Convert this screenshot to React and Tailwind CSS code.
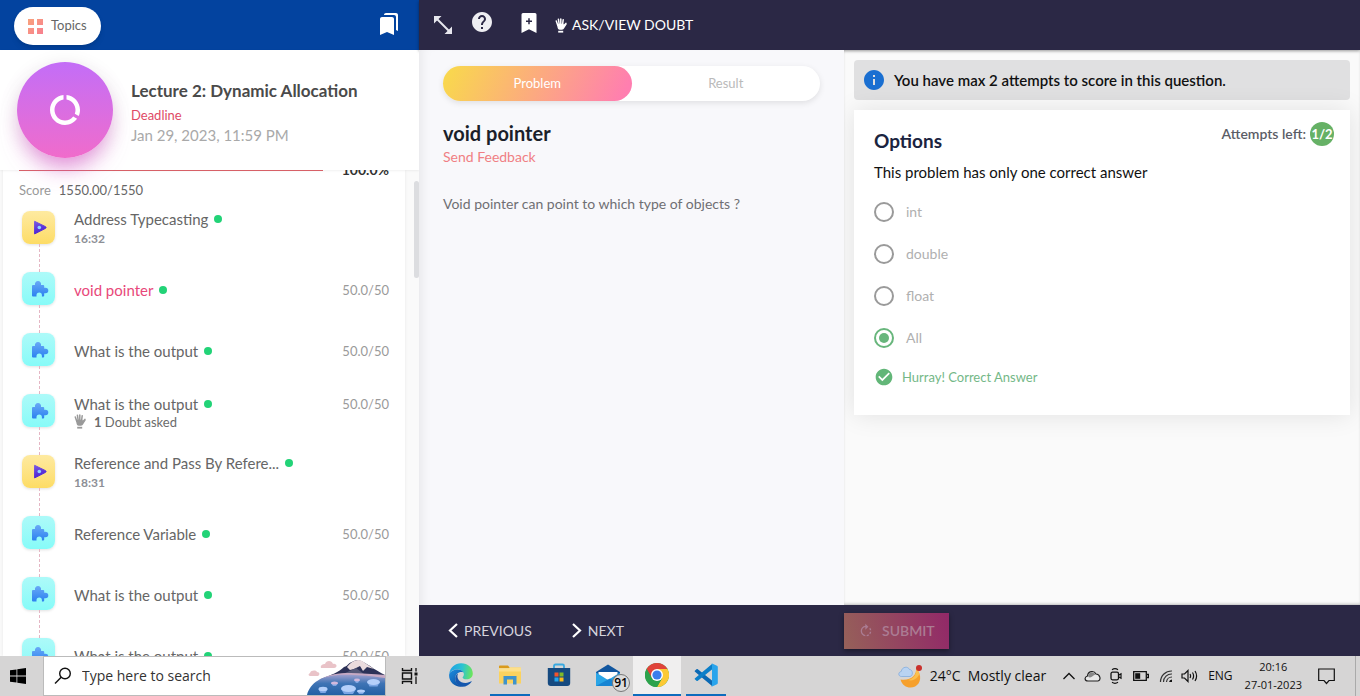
import React from "react";
import { MdBookmarks, MdHelp, MdDataUsage, MdRotateRight, MdCheckCircle, MdInfo } from "react-icons/md";

const lessons = [
  { kind: "video", title: "Address Typecasting", time: "16:32" },
  { kind: "quiz", title: "void pointer", score: "50.0/50", current: true },
  { kind: "quiz", title: "What is the output", score: "50.0/50" },
  { kind: "quiz", title: "What is the output", score: "50.0/50", doubts: 1 },
  { kind: "video", title: "Reference and Pass By Refere...", time: "18:31" },
  { kind: "quiz", title: "Reference Variable", score: "50.0/50" },
  { kind: "quiz", title: "What is the output", score: "50.0/50" },
  { kind: "quiz", title: "What is the output", score: "50.0/50" },
];

const options = ["int", "double", "float", "All"];

function HandIcon({ className }) {
  return (
    <svg viewBox="0 0 12 15" className={className} aria-hidden="true">
      <g fill="none" stroke="currentColor" strokeLinecap="round" strokeWidth="1.5">
        <path d="M1.3 3 2.8 7.5M3.4 1.2 4.2 6.5M5.8.9V6.5M8.2 1.7 7.6 6.5M8.2 8.2 10.9 5.4" />
      </g>
      <path d="M2 5.8h6.4l.8 1.6 1.9-1.8.6.7L9 10.6c-.6.9-1.2 1.1-2 1.1H4.6c-1 0-1.7-.9-2-2Z" fill="currentColor" />
      <path d="M3.2 12.8h5V14.6h-5Z" fill="currentColor" />
    </svg>
  );
}

function TopicsIcon() {
  return (
    <svg viewBox="0 0 15 15" className="size-[15px]" aria-hidden="true">
      <defs>
        <linearGradient id="topics" x1="0" y1="0" x2="1" y2="1">
          <stop offset="0" stopColor="#f9a27c" />
          <stop offset="1" stopColor="#f77f8f" />
        </linearGradient>
      </defs>
      <path d="M0 0h6v6H0ZM9 0h6v6H9ZM0 9h6v6H0ZM9 9h6v6H9Z" fill="url(#topics)" />
    </svg>
  );
}

function LessonIcon({ kind }) {
  if (kind === "video") {
    return (
      <span className="flex size-[33px] items-center justify-center rounded-lg bg-linear-to-b from-[#feeaa0] to-[#fddc64] shadow-[0_1px_3px_rgba(0,0,0,0.12)]">
        <svg viewBox="0 0 14 15" className="ml-0.5 h-[15px] w-3.5" aria-hidden="true">
          <defs>
            <linearGradient id="play" x1="0" y1="0" x2="0.3" y2="1">
              <stop offset="0" stopColor="#7a5ae0" />
              <stop offset="1" stopColor="#4a1fd6" />
            </linearGradient>
          </defs>
          <path d="M1.600 1.300 12.600 6.700c.7.400.7 1.200 0 1.600L1.600 13.900Z" fill="url(#play)" stroke="url(#play)" strokeWidth="1" strokeLinejoin="round" />
          <circle cx="6.300" cy="7.500" r="1.800" fill="#8fd0ff" />
        </svg>
      </span>
    );
  }
  return (
    <span className="flex size-[33px] items-center justify-center rounded-lg bg-linear-to-b from-[#adfaf9] to-[#86fbf8] shadow-[0_1px_3px_rgba(0,0,0,0.12)]">
      <svg viewBox="0 0 18 18" className="ml-0.5 size-[18px]" aria-hidden="true">
        <defs>
          <linearGradient id="puzzle" x1="0" y1="0" x2="0" y2="1">
            <stop offset="0" stopColor="#69a9f6" />
            <stop offset="1" stopColor="#2c82f0" />
          </linearGradient>
        </defs>
        <path
          d="M2 5h2a3.100 3.100 0 1 1 6 0h2.200a1 1 0 0 1 1 1v1.700h1.300a2.800 2.800 0 0 1 0 5.600h-1.300v2.200a1 1 0 0 1-1 1h-1.300v-1.200a2.700 2.700 0 0 0-5.400 0v1.200H2a1 1 0 0 1-1-1V6a1 1 0 0 1 1-1Z"
          fill="url(#puzzle)"
        />
      </svg>
    </span>
  );
}

function Lesson({ kind, title, time, score, current, doubts }) {
  return (
    <li className="flex h-[61px] gap-[19px] pl-[19px] pr-4">
      <div className="flex flex-col items-center">
        <LessonIcon kind={kind} />
        <span className="ml-0.5 flex-1 border-l border-dashed border-[#e5b6c4]" />
      </div>
      <a href="#lesson" className="flex h-[35px] min-w-0 flex-1 flex-col justify-center">
        <span className="flex items-center gap-1.5 text-[15px] leading-5">
          <span className={current ? "text-[#e8487a]" : "text-[#666]"}>{title}</span>
          <span className="size-2 shrink-0 rounded-full bg-[#22d377]" />
          {score && <span className="ml-auto text-[13px] text-[#9a9a9a]">{score}</span>}
        </span>
        {time && <span className="text-xs leading-5 font-bold text-[#8d8f96]">{time}</span>}
        {doubts && (
          <span className="flex items-center gap-2 text-[13px] leading-4 text-[#6b6b6b]">
            <HandIcon className="h-[15px] w-3 text-[#999]" />
            <span>
              <b>{doubts}</b> Doubt asked
            </span>
          </span>
        )}
      </a>
    </li>
  );
}

function Sidebar() {
  return (
    <aside className="flex min-h-0 flex-col bg-[#fafafa]">
      <div className="flex h-[50px] shrink-0 items-center justify-between bg-[#03439f] px-3.5 pt-0.5">
        <button className="flex h-[38px] items-center gap-2 rounded-full bg-white px-3.5 text-[13px] text-[#666] shadow-md">
          <TopicsIcon />
          Topics
        </button>
        <button aria-label="Bookmarks" className="pr-1 pb-1 text-white">
          <MdBookmarks className="size-6" />
        </button>
      </div>

      <header className="relative z-10 flex h-[120px] shrink-0 items-center gap-[18px] bg-white pl-[17px] shadow-[0_1px_2px_rgba(0,0,0,0.06)]">
        <div className="flex size-24 items-center justify-center rounded-full bg-linear-to-b from-[#c36df7] to-[#f06bcb] text-white shadow-[0_16px_24px_-8px_rgba(224,100,210,0.75),0_4px_20px_rgba(0,0,0,0.1)]">
          <MdDataUsage className="size-9" />
        </div>
        <div className="pt-0.5">
          <h1 className="text-[17px] leading-6 font-bold text-[#4a4a4a]">Lecture 2: Dynamic Allocation</h1>
          <p className="text-[13px] leading-6 text-[#e04a66]">Deadline</p>
          <p className="text-[15px] leading-4 text-[#a9a9a9]">Jan 29, 2023, 11:59 PM</p>
        </div>
      </header>

      <div className="flex min-h-0 flex-1 justify-between overflow-hidden">
        <div className="ml-[3px] w-full bg-white shadow-[0_0_3px_rgba(0,0,0,0.08)]">
          <div className="-mt-[9px] flex h-[18px] items-center pl-4 pr-4">
            <span className="h-0.5 w-[304px] bg-[#e0646c]" />
            <span className="ml-auto text-sm font-bold text-[#333]">100.0%</span>
          </div>
          <p className="flex gap-2 pl-4 text-[13px] leading-[22px] text-[#666]">
            <span className="text-[#999]">Score</span> 1550.00/1550
          </p>
          <ul className="pt-2.5">
            {lessons.map((lesson, i) => (
              <Lesson key={i} {...lesson} />
            ))}
          </ul>
        </div>
        <div className="ml-[9px] w-[5px] shrink-0 pt-[11px]">
          <div className="h-[97px] rounded-sm bg-[#dcdde0]" />
        </div>
      </div>
    </aside>
  );
}

function TopBar() {
  return (
    <nav className="z-10 col-span-2 flex items-center bg-[#2b2845] pl-3.5 text-white shadow-[0_1px_3px_rgba(0,0,0,0.4)]">
      <button aria-label="Expand">
        <svg viewBox="0 0 20 20" className="size-5" aria-hidden="true">
          <path d="M4 4 16 16" stroke="#e7e7ee" strokeWidth="2" />
          <path d="M1 1h7.500L1 8.500ZM19 19h-7.500L19 11.500Z" fill="#e7e7ee" />
        </svg>
      </button>
      <button aria-label="Help" className="mb-1.5 ml-[17px]">
        <MdHelp className="size-6 text-[#eeeef2]" />
      </button>
      <button aria-label="Add bookmark" className="mb-1 ml-[27px]">
        <svg viewBox="0 0 16 20" className="h-5 w-4" aria-hidden="true">
          <path d="M2 0h12a1.500 1.500 0 0 1 1.500 1.500V20L8 16.200.5 20V1.500A1.500 1.500 0 0 1 2 0Z" fill="#fff" />
          <path d="M8 5.200v6M5 8.200h6" stroke="#2b2845" strokeWidth="1.500" />
        </svg>
      </button>
      <button className="ml-[18px] flex items-center gap-[5px] text-sm">
        <HandIcon className="h-[15px] w-3" />
        ASK/VIEW DOUBT
      </button>
    </nav>
  );
}

function Problem() {
  return (
    <section className="z-10 min-h-0 overflow-hidden bg-[#f8f8fb] px-6 pt-4 shadow-[inset_10px_0_12px_-8px_rgba(0,0,0,0.08)]">
      <div className="grid h-[35px] grid-cols-2 rounded-full bg-white text-[13px] shadow-[0_2px_6px_rgba(0,0,0,0.1)]">
        <button className="rounded-full bg-linear-[115deg] from-[#f9d64f] from-5% to-[#ff7eb0] to-95% text-white">Problem</button>
        <button className="text-[#bababa]">Result</button>
      </div>
      <h2 className="mt-5 text-xl leading-6 font-bold text-[#1b1f2a]">void pointer</h2>
      <a href="#feedback" className="block text-sm leading-6 font-normal text-[#f07f84]">
        Send Feedback
      </a>
      <p className="mt-[25px] text-sm leading-5 text-[#6f6f73]">Void pointer can point to which type of objects ?</p>
    </section>
  );
}

function Answer() {
  return (
    <section className="flex min-h-0 flex-col gap-2.5 overflow-hidden bg-[#fafafa] p-2.5 shadow-[inset_0_-2px_3px_-1px_rgba(0,0,0,0.25)]">
      <div className="flex h-10 shrink-0 items-center gap-2 rounded bg-[#e0e0e1] px-2 text-[15px] font-semibold text-[#111]">
        <MdInfo className="size-6 text-[#1a6fd1]" />
        You have max 2 attempts to score in this question.
      </div>
      <form className="bg-white px-5 pt-3 pb-7 shadow-[0_0_24px_rgba(0,0,0,0.1)]">
        <div className="flex items-start justify-between">
          <h2 className="pt-[7px] text-[19px] leading-6 font-bold text-[#1b2440]">Options</h2>
          <p className="-mr-1 flex items-center gap-1 text-sm font-semibold text-[#5b5d66]">
            Attempts left:
            <span className="flex size-6 items-center justify-center rounded-full bg-[#66b166] text-[13px] font-bold text-white">1/2</span>
          </p>
        </div>
        <p className="mt-[7px] text-[15px] leading-6 text-[#111]">This problem has only one correct answer</p>
        <div className="mt-[7px] flex flex-col">
          {options.map((option) => (
            <label key={option} className="flex h-[42px] items-center gap-3 text-sm text-[#b0b0b0]">
              <input
                type="radio"
                name="answer"
                defaultChecked={option === "All"}
                className="size-5 appearance-none rounded-full border-2 border-[#9a9a9a] bg-clip-content p-[3px] checked:border-[#68b67c] checked:bg-[#68b67c]"
              />
              {option}
            </label>
          ))}
        </div>
        <p className="mt-2 flex items-center gap-2 text-[13px] leading-5 text-[#74b887]">
          <MdCheckCircle className="size-5 text-[#62b678]" />
          Hurray! Correct Answer
        </p>
      </form>
    </section>
  );
}

function BottomBar() {
  return (
    <footer className="col-span-2 grid grid-cols-subgrid items-center bg-[#2b2845] text-sm">
      <div className="flex gap-10 pl-[29px] text-[#d5d4dd]">
        <button className="flex items-center gap-1.5">
          <svg viewBox="0 0 10 15" className="h-[15px] w-2.5" aria-hidden="true">
            <path d="M9 1 2 7.500 9 14" fill="none" stroke="#fff" strokeWidth="2.200" />
          </svg>
          PREVIOUS
        </button>
        <button className="flex items-center gap-1.5">
          <svg viewBox="0 0 10 15" className="h-[15px] w-2.5" aria-hidden="true">
            <path d="M1 1 8 7.500 1 14" fill="none" stroke="#fff" strokeWidth="2.200" />
          </svg>
          NEXT
        </button>
      </div>
      <div>
        <button
          disabled
          className="flex h-9 items-center gap-2 bg-linear-[75deg] from-[#966159] to-[#922868] px-3.5 font-semibold text-[#ab7c93] shadow-[0_2px_5px_rgba(0,0,0,0.4)]"
        >
          <MdRotateRight className="size-4" />
          SUBMIT
        </button>
      </div>
    </footer>
  );
}

function SearchArt() {
  return (
    <svg viewBox="0 0 78 36" className="h-9 w-[78px] self-end" aria-hidden="true">
      <defs>
        <linearGradient id="lake" x1="0" y1="0" x2="0" y2="1">
          <stop offset="0" stopColor="#a9a3cf" />
          <stop offset="0.45" stopColor="#3f74b5" />
          <stop offset="1" stopColor="#2360a4" />
        </linearGradient>
      </defs>
      <path d="M14 9c-1-3 2-4 4-4 1-4 7-4 8 0 4-1 5 4 1 4H16ZM3 14c1-3 6-3 7-1 3 0 3 3 1 4H4c-3 0-3-2-1-3Z" fill="#e9c3c8" />
      <path d="M14 20C24 16 32 13 37 8c4-1 4-4 8-5 4-3 9-2 13 1 7 4 10 7 20 12v10H14Z" fill="#2c3157" />
      <path d="M40 8C46 0 53-1 58 4l9 6-7-2-4 4-3-5-6 3-4 1Z" fill="#eadbdd" />
      <path d="M49 9 61 18H44L36 15Z" fill="#555878" />
      <path d="M0 36c3-12 15-20 34-21 15-1 25 3 44 1v20Z" fill="url(#lake)" />
      <path d="M12 21C25 14 45 15 78 19v-3C50 14 28 11 12 21Z" fill="#c7a9c3" />
      <g fill="#7aa5e4">
        <path d="M34 30h15l-3 5h-9ZM60.500 23.500h12l-2 4h-8ZM11.500 30h9l-2 4h-5ZM50 32h8l-2 3h-4ZM24 24h7l-2 3h-3ZM47 21h6l-2 3h-2Z" />
      </g>
      <g fill="#b4cffa">
        <ellipse cx="41.500" cy="29.500" rx="7.500" ry="3.500" />
        <ellipse cx="66.500" cy="23" rx="6.500" ry="3" />
        <ellipse cx="16" cy="30" rx="4.500" ry="2.200" />
        <ellipse cx="54" cy="32" rx="4" ry="1.600" />
      </g>
      <g fill="#d3b9dc">
        <ellipse cx="27.500" cy="24" rx="3.500" ry="1.600" />
        <ellipse cx="50" cy="21" rx="3" ry="1.400" />
      </g>
    </svg>
  );
}

function EdgeIcon() {
  return (
    <svg viewBox="0 0 24 24" className="size-6" aria-hidden="true">
      <defs>
        <linearGradient id="edgeTop" x1="0" y1="0.3" x2="1" y2="0.4">
          <stop offset="0" stopColor="#1e9fe6" />
          <stop offset="0.55" stopColor="#2bc3d2" />
          <stop offset="1" stopColor="#6ce65a" />
        </linearGradient>
        <linearGradient id="edgeBody" x1="0" y1="0" x2="0.7" y2="1">
          <stop offset="0" stopColor="#1c8fe0" />
          <stop offset="1" stopColor="#0c4fa3" />
        </linearGradient>
      </defs>
      <path d="M.2 11C1 4.500 6 .2 12 .2c7 0 11.800 4.700 11.800 10.200 0 3.600-2.900 5.900-6.200 5.900-2.700 0-4-1-4-1.800 0-.6 1.300-1.200 1.300-3.200C14.900 8.300 11.700 6.500 8.500 6.500 4 6.500 1.200 8.600.2 11Z" fill="url(#edgeTop)" />
      <path d="M.2 11C1.500 8 5 6.500 8.500 6.500c2.600 0 5 1.200 6 3-4-1.500-8.300 1.500-8.300 6 0 4 3 7.300 6.800 8.200C6 24.500.1 19 .1 12.500Z" fill="url(#edgeBody)" />
      <path d="M9 10.500c-2 4.500 1.500 9.500 7.500 9.500 2.500 0 4.500-1 5.800-1.700.3-.1.500.1.300.4C20.500 21.500 17 24 13 23.800 8.500 23 6.200 19.500 6.200 15.500c0-2.300 1.200-4.100 2.800-5Z" fill="#1557ad" />
    </svg>
  );
}

function FolderIcon() {
  return (
    <svg viewBox="0 0 22 20" className="h-5 w-[22px]" aria-hidden="true">
      <path d="M0 1.500C0 .7.500.5 1 .5h8l2 2.500H0Z" fill="#d99a1c" />
      <path d="M0 3.500 9 3.500 11 2.500h10c.6 0 1 .4 1 1V18.500H0Z" fill="#fbd25f" />
      <path d="M0 3.500h9l2-1h11v4H0Z" fill="#fde08a" />
      <path d="M4.500 11h13v8.500H14v-5H8v5H4.500Z" fill="#3f93cc" />
    </svg>
  );
}

function StoreIcon() {
  return (
    <svg viewBox="0 0 24 24" className="size-6" aria-hidden="true">
      <path d="M7 6V3c0-1 .5-1.500 1.500-1.500h7c1 0 1.500.5 1.500 1.500v3" fill="none" stroke="#39a9e0" strokeWidth="1.800" />
      <path d="M.8 5h22.400v15a3 3 0 0 1-3 3H3.800a3 3 0 0 1-3-3Z" fill="#164a80" />
      <path d="M7.500 9.500h4v4h-4Z" fill="#f2552c" />
      <path d="M12.500 9.500h4v4h-4Z" fill="#7fba28" />
      <path d="M7.500 14.500h4v4h-4Z" fill="#22a6ee" />
      <path d="M12.500 14.500h4v4h-4Z" fill="#fdbb1c" />
    </svg>
  );
}

function MailIcon() {
  return (
    <span className="relative">
      <svg viewBox="0 0 24 23" className="h-[23px] w-6" aria-hidden="true">
        <path d="M0 8 12 .5 24 8v3H0Z" fill="#11569f" />
        <path d="M2.500 8h19v7h-19Z" fill="#fff" />
        <path d="M0 8.500 12 16 24 8.500V22H0Z" fill="#2aa5e6" />
        <path d="M0 22 14 14.500 24 22Z" fill="#1684d3" />
      </svg>
      <span className="absolute top-2.5 left-4 flex size-[18px] items-center justify-center rounded-full border border-[#777] bg-[#dcdcdc] text-xs font-semibold text-black">
        91
      </span>
    </span>
  );
}

function ChromeIcon() {
  return (
    <svg viewBox="0 0 24 24" className="size-6" aria-hidden="true">
      <circle cx="12" cy="12" r="12" fill="#2da24c" />
      <path d="M12 12 1.600 6A12 12 0 0 1 22.400 6Z" fill="#e0433a" />
      <path d="M12 6h10.400A12 12 0 0 1 12 24l5.200-9Z" fill="#fcc934" />
      <path d="M1.600 6 6.800 15 12 12V6Z" fill="#e0433a" />
      <path d="M1.600 6A12 12 0 0 0 12 24l5.200-9A6 6 0 0 1 6.800 15Z" fill="#2da24c" />
      <circle cx="12" cy="12" r="6" fill="#fff" />
      <circle cx="12" cy="12" r="4.600" fill="#3b7ded" />
    </svg>
  );
}

function CodeIcon() {
  return (
    <svg viewBox="0 0 24 24" className="size-6" aria-hidden="true">
      <path d="M.8 7.800 2.500 6.200c.4-.3.900-.3 1.300 0L18 17.500V23L1 8.800a.7.7 0 0 1-.2-1Z" fill="#0b69b4" />
      <path d="M.8 16.200 2.500 17.800c.4.3.9.3 1.300 0L18 6.500V1L1 15.200a.7.7 0 0 0-.2 1Z" fill="#0c7fc9" />
      <path d="M17.500.3 23 2.800c.5.2.8.7.8 1.200V20c0 .5-.3 1-.8 1.200l-5.500 2.500c-.3.100-.7 0-1-.3.700.7 1.500 0 1.500-.8V1.400c0-.8-.8-1.500-1.500-.8.300-.3.700-.4 1-.3Z" fill="#29a4ec" />
    </svg>
  );
}

const apps = [
  { name: "Edge", icon: <EdgeIcon /> },
  { name: "File Explorer", icon: <FolderIcon />, state: "open" },
  { name: "Store", icon: <StoreIcon /> },
  { name: "Mail", icon: <MailIcon /> },
  { name: "Chrome", icon: <ChromeIcon />, state: "active" },
  { name: "Code", icon: <CodeIcon />, state: "open" },
];

function AppButton({ name, icon, state }) {
  return (
    <button
      aria-label={name}
      className={
        state === "active"
          ? "flex h-full w-12 flex-col items-center bg-[#f0efef]"
          : "flex h-full w-12 flex-col items-center"
      }
    >
      <span className="flex flex-1 items-center">{icon}</span>
      <span
        className={
          state === "active"
            ? "h-0.5 w-full bg-[#0f6cbd]"
            : state === "open"
              ? "h-0.5 w-10 bg-[#0f6cbd]"
              : "h-0.5 w-10"
        }
      />
    </button>
  );
}

function Tray() {
  return (
    <div className="ml-auto flex h-full items-center">
      <svg viewBox="0 0 25 23" className="h-[23px] w-[25px]" aria-hidden="true">
        <path d="M18 3c1 7-5 13-15.500 11.500C4 20 8 22.500 12.500 22.500c7 0 11.500-6.500 9-13.500C20.800 6.500 19.500 4.500 18 3Z" fill="#f6a02c" />
        <path d="M18 3c1 7-3 11-8 12 6 2 10-3 11.500-6C20.800 6.500 19.500 4.500 18 3Z" fill="#fbc04d" />
        <path d="M3.500 11.500c-3.500 0-3.500-4.500-.3-5C4 1.500 10 1 11.500 4.500c3.500 0 4 6.500.5 7Z" fill="#b9d3f2" stroke="#7aa7dc" strokeWidth="0.700" />
        <circle cx="21" cy="3" r="3" fill="#c9302c" />
      </svg>
      <span className="ml-[7px] text-sm">24°C</span>
      <span className="ml-[7px] text-sm">Mostly clear</span>
      <div className="ml-4 flex items-center gap-2">
        <svg viewBox="0 0 14 8" className="h-2 w-3.5" aria-hidden="true">
          <path d="M1.500 7 7 1.500 12.500 7" fill="none" stroke="#111" strokeWidth="1.300" />
        </svg>
        <svg viewBox="0 0 17 12" className="h-3 w-[17px]" aria-hidden="true">
          <path d="M4 11C.5 11 0 7 3.500 6 4 1 10 0 12 4c4 0 5.500 6 2 7Z" fill="#e8e8e8" stroke="#222" strokeWidth="1.200" />
          <path d="M4 6c.5-4 5.500-5 7.500-1.500C9 5 8 7.500 6 7.500S4.500 6 4 6Z" fill="#888" />
        </svg>
        <svg viewBox="0 0 14 16" className="h-4 w-3.5" aria-hidden="true">
          <path d="M3 1.700Q6-.3 9 1.700M3 14.300Q6 16.300 9 14.300" fill="none" stroke="#111" strokeWidth="1.200" />
          <rect x="2" y="4.200" width="7.500" height="7.600" rx="1.500" fill="none" stroke="#111" strokeWidth="1.300" />
          <path d="M9.500 7.200 12 5.800v4.400L9.500 8.800" fill="none" stroke="#111" strokeWidth="1.200" />
        </svg>
        <svg viewBox="0 0 16 10" className="ml-0.5 h-2.5 w-4" aria-hidden="true">
          <path d="M.7.7h12.600v8.600H.7ZM14 3.500h1.500v3H14" fill="none" stroke="#111" strokeWidth="1.300" />
          <path d="M2.200 2.200h5v5.600h-5Z" fill="#111" />
        </svg>
        <svg viewBox="0 0 14 14" className="ml-0.5 size-3.5" aria-hidden="true">
          <g fill="none" stroke="#333" strokeWidth="1.200">
            <path d="M1.500 13A11 11 0 0 1 13 2M4.500 13A8 8 0 0 1 13 5M7.500 13A5.500 5.500 0 0 1 13 8" />
          </g>
          <path d="M10 13a3 3 0 0 1 3-2.500V13Z" fill="#111" />
        </svg>
        <svg viewBox="0 0 17 14" className="h-3.5 w-[17px]" aria-hidden="true">
          <path d="M1 5h2.500L7 1.500v11L3.500 9H1ZM9 5q1.200 2 0 4M11.500 3.500q2.200 3.500 0 7M14 2q3.200 5 0 10" fill="none" stroke="#111" strokeWidth="1.200" />
        </svg>
      </div>
      <span className="ml-2.5 text-xs">ENG</span>
      <p className="ml-3 text-center text-[11px] leading-[18px]">
        20:16
        <br />
        27-01-2023
      </p>
      <button aria-label="Notifications" className="ml-4">
        <svg viewBox="0 0 17 17" className="size-[17px]" aria-hidden="true">
          <path d="M.7 1h15.600v11.500H11L8.500 15.500 6 12.500H.7Z" fill="none" stroke="#111" strokeWidth="1.200" />
        </svg>
      </button>
      <span className="ml-5 h-full w-[5px] border-l border-[#aaa]" />
    </div>
  );
}

function Taskbar() {
  return (
    <div className="z-20 flex h-10 shrink-0 items-center bg-[#d6d5d5] font-['Open_Sans',sans-serif] text-[#111]">
      <button aria-label="Start" className="flex w-[43px] justify-center pr-2">
        <svg viewBox="0 0 16 16" className="size-4" aria-hidden="true">
          <path d="M0 2.300 6.500 1.400v6.200H0ZM7.300 1.300 16 0v7.600H7.300ZM0 8.400h6.500v6.200L0 13.700ZM7.300 8.400H16V16l-8.700-1.300Z" fill="#000" />
        </svg>
      </button>
      <div className="flex h-full w-[343px] items-center border border-[#bbb] bg-white pl-2.5">
        <svg viewBox="0 0 18 18" className="size-[18px]" aria-hidden="true">
          <circle cx="11" cy="6.500" r="5.300" fill="none" stroke="#111" strokeWidth="1.400" />
          <path d="M7.200 10.200 1 16.500" stroke="#111" strokeWidth="1.400" />
        </svg>
        <input
          aria-label="Search"
          placeholder="Type here to search"
          className="ml-2.5 min-w-0 flex-1 text-sm outline-none placeholder:text-[#333]"
        />
        <SearchArt />
      </div>
      <button aria-label="Task view" className="ml-[15px] mr-[19px]">
        <svg viewBox="0 0 17 16" className="h-4 w-[17px]" aria-hidden="true">
          <path d="M1.500 0v2.500h9V0M1.500 16v-2.500h9V16M1.500 5h9v6h-9Z" fill="none" stroke="#111" strokeWidth="1.400" />
          <path d="M15 0v3.500M15 8.500V16" stroke="#111" strokeWidth="1.300" />
          <path d="M13.500 4.500h3v3h-3Z" fill="#111" />
        </svg>
      </button>
      <div className="flex h-full gap-px">
        {apps.map((app) => (
          <AppButton key={app.name} {...app} />
        ))}
      </div>
      <Tray />
    </div>
  );
}

export default function App() {
  return (
    <div className="flex h-screen flex-col overflow-hidden bg-white font-[Lato,sans-serif]">
      <div className="grid min-h-0 flex-1 grid-cols-[419px_1fr]">
        <Sidebar />
        <main className="grid min-h-0 grid-cols-[425fr_516fr] grid-rows-[50px_1fr_51px]">
          <TopBar />
          <Problem />
          <Answer />
          <BottomBar />
        </main>
      </div>
      <Taskbar />
    </div>
  );
}
